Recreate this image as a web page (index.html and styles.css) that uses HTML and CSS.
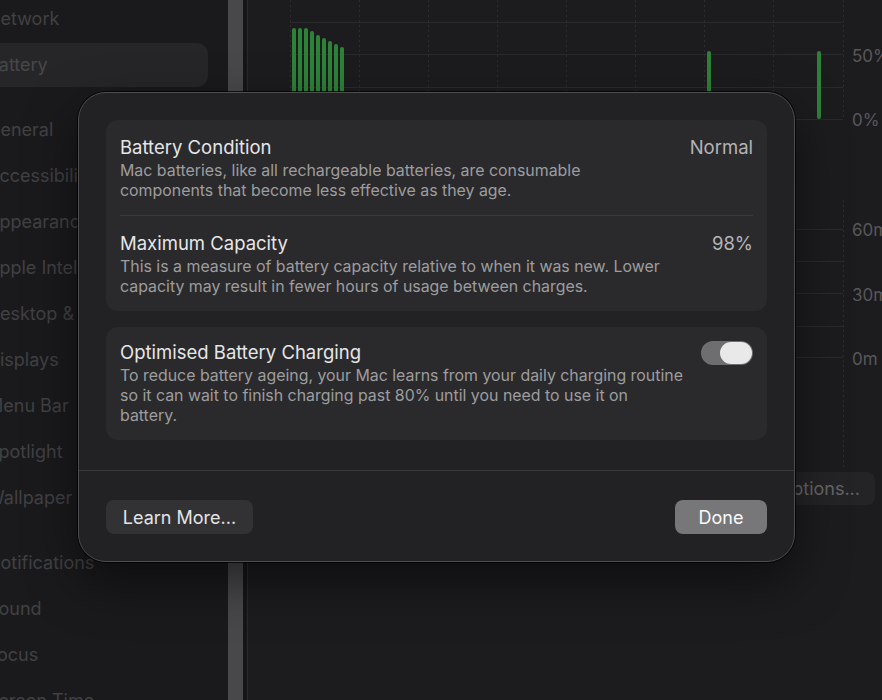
FILE: index.html
```html
<!DOCTYPE html>
<html lang="en">
<head>
<meta charset="utf-8">
<title>Battery</title>
<link rel="stylesheet" href="styles.css">
</head>
<body>
<div class="window">
  <aside class="sidebar">
    <ul class="nav-group first">
      <li class="nav-item">Network</li>
      <li class="nav-item selected">Battery</li>
    </ul>
    <ul class="nav-group">
      <li class="nav-item">General</li>
      <li class="nav-item">Accessibility</li>
      <li class="nav-item">Appearance</li>
      <li class="nav-item">Apple Intelligence</li>
      <li class="nav-item">Desktop &amp; Dock</li>
      <li class="nav-item">Displays</li>
      <li class="nav-item">Menu Bar</li>
      <li class="nav-item">Spotlight</li>
      <li class="nav-item">Wallpaper</li>
    </ul>
    <ul class="nav-group">
      <li class="nav-item">Notifications</li>
      <li class="nav-item">Sound</li>
      <li class="nav-item">Focus</li>
      <li class="nav-item">Screen Time</li>
    </ul>
  </aside>
  <div class="scrollbar"></div>
  <div class="gutter"></div>
  <main class="content">
    <svg class="chart" width="634" height="470" viewBox="0 0 634 470" xmlns="http://www.w3.org/2000/svg">
      <g stroke="#2a2a2c" stroke-width="1">
        <line x1="42" y1="22.5" x2="595" y2="22.5"/>
        <line x1="42" y1="54.5" x2="595" y2="54.5"/>
        <line x1="42" y1="87.5" x2="595" y2="87.5"/>
        <line x1="42" y1="119.5" x2="595" y2="119.5"/>
        <line x1="42" y1="229.5" x2="595" y2="229.5"/>
        <line x1="42" y1="261.5" x2="595" y2="261.5"/>
        <line x1="42" y1="293.5" x2="595" y2="293.5"/>
        <line x1="42" y1="326.5" x2="595" y2="326.5"/>
        <line x1="42" y1="357.5" x2="595" y2="357.5"/>
      </g>
      <g stroke="#2c2c2e" stroke-width="1" stroke-dasharray="2 3">
        <line x1="42.5" y1="0" x2="42.5" y2="119"/>
        <line x1="111.5" y1="0" x2="111.5" y2="119"/>
        <line x1="180.5" y1="0" x2="180.5" y2="119"/>
        <line x1="249.5" y1="0" x2="249.5" y2="119"/>
        <line x1="318.5" y1="0" x2="318.5" y2="119"/>
        <line x1="387.5" y1="0" x2="387.5" y2="119"/>
        <line x1="456.5" y1="0" x2="456.5" y2="119"/>
        <line x1="525.5" y1="0" x2="525.5" y2="119"/>
        <line x1="595.5" y1="0" x2="595.5" y2="119"/>
        <line x1="525.5" y1="200" x2="525.5" y2="470"/>
        <line x1="595.5" y1="200" x2="595.5" y2="470"/>
      </g>
      <g fill="#2e8238">
        <rect x="44" y="28" width="4" height="91" rx="2"/>
        <rect x="50" y="28" width="4" height="91" rx="2"/>
        <rect x="56" y="28" width="4" height="91" rx="2"/>
        <rect x="62" y="31" width="4" height="88" rx="2"/>
        <rect x="68" y="35" width="4" height="84" rx="2"/>
        <rect x="74" y="38" width="4" height="81" rx="2"/>
        <rect x="80" y="41" width="4" height="78" rx="2"/>
        <rect x="86" y="44" width="4" height="75" rx="2"/>
        <rect x="92" y="47" width="4" height="72" rx="2"/>
        <rect x="459" y="51" width="4" height="68" rx="2"/>
        <rect x="569" y="51" width="4" height="68" rx="2"/>
      </g>
      <g class="axis-label" fill="#58585a">
        <text x="604" y="62">50%</text>
        <text x="604" y="126">0%</text>
        <text x="604" y="236">60m</text>
        <text x="604" y="301">30m</text>
        <text x="604" y="365">0m</text>
      </g>
    </svg>
    <div class="options-row">
      <button class="options-btn">Options...</button>
    </div>
  </main>

  <div class="modal">
    <div class="modal-body">
      <section class="card">
        <div class="row">
          <div class="text">
            <div class="title">Battery Condition</div>
            <div class="desc">Mac batteries, like all rechargeable batteries, are consumable<br>components that become less effective as they age.</div>
          </div>
          <div class="value">Normal</div>
        </div>
        <div class="row">
          <div class="text">
            <div class="title">Maximum Capacity</div>
            <div class="desc">This is a measure of battery capacity relative to when it was new. Lower<br>capacity may result in fewer hours of usage between charges.</div>
          </div>
          <div class="value">98%</div>
        </div>
      </section>
      <section class="card card-toggle">
        <div class="row">
          <div class="text">
            <div class="title">Optimised Battery Charging</div>
            <div class="desc">To reduce battery ageing, your Mac learns from your daily charging routine<br>so it can wait to finish charging past 80% until you need to use it on<br>battery.</div>
          </div>
          <div class="toggle on"><span class="knob"></span></div>
        </div>
      </section>
    </div>
    <div class="modal-footer">
      <button class="btn btn-secondary">Learn More...</button>
      <button class="btn btn-primary">Done</button>
    </div>
  </div>
</div>
</body>
</html>
```

FILE: styles.css
```css
* { box-sizing: border-box; }

html, body {
  margin: 0;
  padding: 0;
}

body {
  width: 882px;
  height: 700px;
  overflow: hidden;
  background: #1b1b1d;
  font-family: Inter, "Noto Sans", "Liberation Sans", sans-serif;
  -webkit-font-smoothing: antialiased;
}

.window {
  position: relative;
  display: flex;
  width: 882px;
  height: 700px;
}

/* Sidebar */
.sidebar {
  width: 228px;
  flex: none;
  background: #1a1a1c;
  overflow: hidden;
}

.nav-group {
  list-style: none;
  margin: 19px 0 0;
  padding: 0;
}

.nav-group.first {
  margin-top: -4px;
}

.nav-item {
  height: 46px;
  line-height: 44px;
  margin-left: -13px;
  font-size: 18px;
  color: #414143;
  white-space: nowrap;
  border-top: 1px solid transparent;
  border-bottom: 1px solid transparent;
}

.nav-item.selected {
  width: 221px;
  background: #262628;
  background-clip: padding-box;
  border-radius: 12px;
  color: #47474a;
}

.scrollbar {
  width: 15px;
  flex: none;
  background: #48484a;
}

.gutter {
  width: 4px;
  flex: none;
  background: #161618;
}

/* Content */
.content {
  flex: 1;
  display: flex;
  flex-direction: column;
  background: #1c1c1e;
  border-left: 1px solid #2a2a2c;
}

.chart {
  display: block;
  flex: none;
}

.axis-label text {
  font-family: Inter, "Noto Sans", sans-serif;
  font-size: 17px;
}

.options-row {
  display: flex;
  justify-content: flex-end;
  padding: 2px 7px 0 0;
}

.options-btn {
  height: 33px;
  padding: 0 15px;
  border: none;
  border-radius: 8px;
  background: #242426;
  color: #666668;
  font-family: inherit;
  font-size: 18px;
}

/* Modal */
.modal {
  position: absolute;
  left: 78px;
  top: 92px;
  width: 717px;
  height: 470px;
  display: flex;
  flex-direction: column;
  background: #222224;
  border: 1px solid #4e4e50;
  border-radius: 28px;
  box-shadow: 0 0 0 1px rgba(0, 0, 0, 0.75), 0 20px 50px rgba(0, 0, 0, 0.5);
}

.modal-body {
  display: flex;
  flex-direction: column;
  gap: 16px;
  padding: 27px 27px 0;
}

.card {
  background: #2a2a2c;
  border-radius: 12px;
  padding: 0 14px;
}

.row {
  display: flex;
  justify-content: space-between;
  align-items: flex-start;
  padding: 16px 0 14px;
}

.row + .row {
  border-top: 1px solid #3a3a3c;
}

.card-toggle .row {
  padding-top: 14px;
}

.title {
  font-size: 18.5px;
  line-height: 22px;
  color: #e6e6e8;
}

.desc {
  margin-top: 3px;
  font-size: 15.9px;
  line-height: 20px;
  color: #9d9d9f;
}

.value {
  font-size: 18.5px;
  line-height: 22px;
  color: #b4b4b6;
}

.toggle {
  position: relative;
  width: 52px;
  height: 24px;
  flex: none;
  border-radius: 12px;
  background: #6e6e70;
}

.toggle .knob {
  position: absolute;
  top: 1px;
  right: 1px;
  width: 32px;
  height: 22px;
  border-radius: 11px;
  background: #e9e9e9;
}

.modal-footer {
  display: flex;
  justify-content: space-between;
  margin-top: 30px;
  padding: 29px 27px 0;
  border-top: 1px solid #39393b;
}

.btn {
  height: 34px;
  border: none;
  border-radius: 8px;
  font-family: inherit;
  font-size: 18px;
}

.btn-secondary {
  width: 147px;
  background: #323234;
  color: #e4e4e6;
}

.btn-primary {
  width: 92px;
  background: #777779;
  color: #fafafa;
}
```
